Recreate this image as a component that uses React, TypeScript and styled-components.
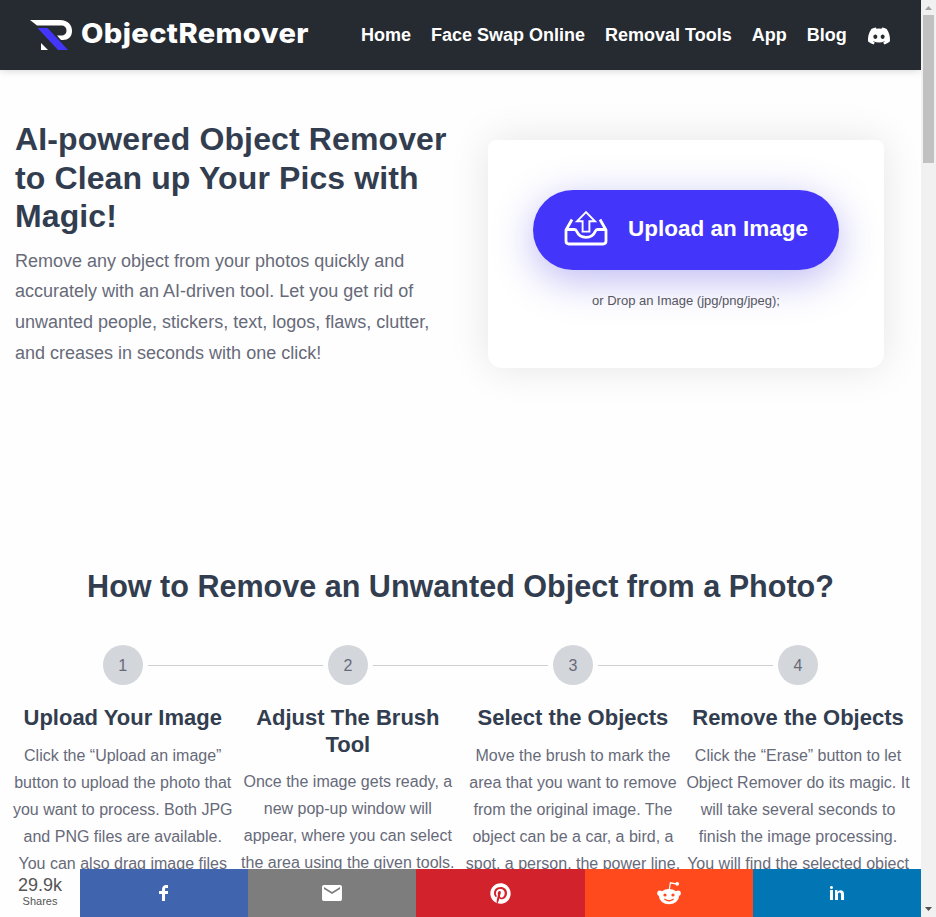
import React from "react";
import styled, { createGlobalStyle } from "styled-components";
import { FaDiscord, FaPinterest } from "react-icons/fa";

const GlobalStyle = createGlobalStyle`
  * { box-sizing: border-box; }
  html, body { margin: 0; overflow: hidden; background: #fefefe; }
  body { font-family: "Liberation Sans", Arial, sans-serif; }
  h1, h2, h3, p { margin: 0; }
`;

const Window = styled.div`
  display: flex;
  width: 936px;
  height: 917px;
`;

const Page = styled.div`
  display: flex;
  flex-direction: column;
  width: 921px;
  height: 100%;
  overflow: hidden;
`;

const Header = styled.header`
  display: flex;
  align-items: center;
  flex: none;
  height: 70px;
  padding: 0 30px;
  background: #262b32;
  color: #fff;
  box-shadow: 0 0 8px rgba(0, 20, 20, 0.2);
  z-index: 1;
`;

const Brand = styled.a`
  display: flex;
  align-items: center;
  width: 331px;
  svg { flex: none; }
`;

const Wordmark = styled.span`
  margin: -2px 0 0 8px;
  font: 800 27px/40px Inter, sans-serif;
  letter-spacing: 0.35px;
  white-space: nowrap;
  transform: scaleX(1.076);
  transform-origin: left center;
`;

const Nav = styled.nav`
  display: flex;
  align-items: center;
  gap: 20px;
  font-size: 18px;
  font-weight: 700;
  line-height: 30px;
  white-space: nowrap;
  svg { display: block; margin: 2px 0 0 0; }
`;

const Content = styled.main`
  flex: 1;
  min-height: 0;
  overflow: hidden;
`;

const Hero = styled.section`
  display: flex;
  justify-content: space-between;
  height: 496px;
  padding: 50px 37px 0 15px;
`;

const HeroText = styled.div`
  width: 445px;
  white-space: nowrap;
`;

const Title = styled.h1`
  color: #323d4f;
  font-size: 32px;
  line-height: 38.5px;
  letter-spacing: 0.12px;
`;

const Lead = styled.p`
  margin-top: 10.4px;
  color: #676a79;
  font-size: 18px;
  line-height: 30.6px;
`;

const UploadCard = styled.div`
  display: flex;
  flex-direction: column;
  align-items: center;
  width: 396px;
  height: 228px;
  margin-top: 20px;
  padding-top: 50px;
  border-radius: 8px 8px 14px 14px;
  background: #fff;
  box-shadow: 0 0 40px rgba(0, 0, 0, 0.1);
`;

const UploadButton = styled.button`
  display: flex;
  align-items: center;
  width: 306px;
  height: 80px;
  padding: 0 0 2px 31px;
  border: 0;
  border-radius: 40px;
  background: #4336fa;
  color: #fff;
  font: 700 22.5px "Liberation Sans", Arial, sans-serif;
  white-space: nowrap;
  box-shadow: 0 10px 40px rgba(67, 54, 220, 0.35);
  svg { flex: none; margin: -3px 20px 0 0; }
`;

const DropHint = styled.p`
  margin-top: 22px;
  color: #55565e;
  font-size: 13px;
  line-height: 18px;
`;

const SectionTitle = styled.h2`
  color: #323d4f;
  font-size: 30.55px;
  line-height: 40px;
  text-align: center;
  white-space: nowrap;
`;

const Steps = styled.ol`
  display: grid;
  grid-template-columns: repeat(4, 225.1px);
  margin: 39px 0 0 10.2px;
  padding: 0;
  list-style: none;
`;

const Step = styled.li`
  display: flex;
  flex-direction: column;
  align-items: center;
  text-align: center;
  white-space: nowrap;
`;

const Marker = styled.div`
  display: grid;
  grid-template-columns: 40px 175px;
  align-items: center;
  column-gap: 5px;
  width: 40px;
`;

const Circle = styled.span`
  height: 40px;
  border-radius: 50%;
  background: #d3d6db;
  color: #676a79;
  font-size: 16px;
  line-height: 41px;
`;

const Connector = styled.span`
  height: 1px;
  background: #cdd0d3;
`;

const StepTitle = styled.h3`
  margin-top: 20px;
  color: #323d4f;
  font-size: 22px;
  line-height: 26.5px;
`;

const StepText = styled.p`
  margin-top: 10px;
  color: #676a79;
  font-size: 16px;
  line-height: 27px;
`;

const Line = styled.span`
  display: block;
`;

const ShareBar = styled.footer`
  display: grid;
  grid-template-columns: 80px repeat(5, 1fr);
  flex: none;
  height: 48px;
  background: #fefefe;
`;

const ShareCount = styled.div`
  padding-top: 6px;
  color: #555;
  font-size: 18px;
  line-height: 20px;
  text-align: center;
  small { display: block; font-size: 11px; line-height: 12px; }
`;

const ShareButton = styled.a<{ $color: string }>`
  display: flex;
  align-items: center;
  justify-content: center;
  background: ${(p) => p.$color};
  color: #fff;
`;

const Scrollbar = styled.div`
  display: flex;
  flex-direction: column;
  justify-content: space-between;
  align-items: center;
  width: 15px;
  height: 100%;
  background: #f1f1f1;
`;

const Thumb = styled.div`
  width: 11px;
  height: 148px;
  margin-bottom: auto;
  background: #c1c1c1;
`;

const ScrollArrow = styled.svg`
  display: block;
  width: 15px;
  height: 15px;
`;

const steps = [
  {
    title: ["Upload Your Image"],
    text: ["Click the “Upload an image”", "button to upload the photo that", "you want to process. Both JPG", "and PNG files are available.", "You can also drag image files"],
  },
  {
    title: ["Adjust The Brush", "Tool"],
    text: ["Once the image gets ready, a", "new pop-up window will", "appear, where you can select", "the area using the given tools."],
  },
  {
    title: ["Select the Objects"],
    text: ["Move the brush to mark the", "area that you want to remove", "from the original image. The", "object can be a car, a bird, a", "spot, a person, the power line,"],
  },
  {
    title: ["Remove the Objects"],
    text: ["Click the “Erase” button to let", "Object Remover do its magic. It", "will take several seconds to", "finish the image processing.", "You will find the selected object"],
  },
];

const Lines = ({ items }: { items: string[] }) => (
  <>
    {items.map((t) => (
      <Line key={t}>{t}</Line>
    ))}
  </>
);

const LogoMark = () => (
  <svg width="43" height="32" viewBox="0 0 43 32">
    <path d="M0 1H30C38 1 42 6 42 12C42 18 38 21 33 21H31L27 16.5H31C34.5 16.5 36.5 14.5 36.5 11.5C36.5 8.5 34.5 6.5 31 6.5H7Z" fill="#fff" />
    <path d="M7.5 9H17.5L38 31H28Z" fill="#4336fa" />
    <path d="M11 24V31H18Z" fill="#fff" />
  </svg>
);

const UploadIcon = () => (
  <svg width="44" height="36" viewBox="0 0 44 36" fill="none" stroke="#fff" strokeLinejoin="round">
    <path d="M8 9.5L2 20V31Q2 34 5 34H39Q42 34 42 31V20L36 9.5" strokeWidth="2.8" />
    <path d="M2 19.5H10.5Q12 19.5 12.8 21.5C14.5 25.5 18 27.3 22 27.3S29.5 25.5 31.2 21.5Q32 19.5 33.5 19.5H42" strokeWidth="2.8" />
    <path d="M22 2.2L13 11.3H18.6V21.6H25.4V11.3H31Z" strokeWidth="1.9" strokeLinejoin="miter" />
  </svg>
);

const RedditIcon = ({ cut }: { cut: string }) => (
  <svg width="24" height="24" viewBox="0 0 24 24" fill="#fff">
    <circle cx="2.8" cy="12.2" r="2.6" />
    <circle cx="21.2" cy="12.2" r="2.6" />
    <ellipse cx="12" cy="15.6" rx="10" ry="7.7" />
    <path d="M12.2 9L13.4 1.8L19 2.8" fill="none" stroke="#fff" strokeWidth="1.2" />
    <circle cx="20.2" cy="2.8" r="1.9" />
    <circle cx="8" cy="14" r="1.6" fill={cut} />
    <circle cx="16" cy="14" r="1.6" fill={cut} />
    <path d="M7.8 18.3Q12 21.2 16.2 18.3" fill="none" stroke={cut} strokeWidth="1.3" strokeLinecap="round" />
  </svg>
);

const ShareGlyph = ({ d }: { d: string }) => (
  <svg width="24" height="24" viewBox="0 0 40 40" fill="#fff">
    <path d={d} />
  </svg>
);

const facebook = "m21.7 16.7h5v5h-5v11.6h-5v-11.6h-5v-5h5v-2.1c0-2 0.6-4.5 1.8-5.9 1.3-1.3 2.8-2 4.7-2h3.5v5h-3.5c-0.9 0-1.5 0.6-1.5 1.5v3.5z";
const email = "m33.4 13.4v-3.4l-13.4 8.4-13.4-8.4v3.4l13.4 8.2z m0-6.8q1.3 0 2.3 1.1t0.9 2.3v20q0 1.3-0.9 2.3t-2.3 1.1h-26.8q-1.3 0-2.3-1.1t-0.9-2.3v-20q0-1.3 0.9-2.3t2.3-1.1h26.8z";
const linkedin = "m13.3 31.7h-5v-16.7h5v16.7z m18.4 0h-5v-8.9c0-2.4-0.9-3.5-2.5-3.5-1.3 0-2.1 0.6-2.5 1.9v10.5h-5s0-15 0-16.7h3.9l0.3 3.3h0.1c1-1.6 2.7-2.8 4.9-2.8 1.7 0 3.1 0.5 4.2 1.7 1 1.2 1.6 2.8 1.6 5.1v9.4z m-18.3-20.9c0 1.4-1.1 2.5-2.6 2.5s-2.5-1.1-2.5-2.5 1.1-2.5 2.5-2.5 2.6 1.2 2.6 2.5z";

export default function App() {
  return (
    <Window>
      <GlobalStyle />
      <Page>
        <Header>
          <Brand>
            <LogoMark />
            <Wordmark>ObjectRemover</Wordmark>
          </Brand>
          <Nav>
            <a>Home</a>
            <a>Face Swap Online</a>
            <a>Removal Tools</a>
            <a>App</a>
            <a>Blog</a>
            <a><FaDiscord size={24} /></a>
          </Nav>
        </Header>
        <Content>
          <Hero>
            <HeroText>
              <Title>
                <Lines items={["AI-powered Object Remover", "to Clean up Your Pics with", "Magic!"]} />
              </Title>
              <Lead>
                <Lines
                  items={[
                    "Remove any object from your photos quickly and",
                    "accurately with an AI-driven tool. Let you get rid of",
                    "unwanted people, stickers, text, logos, flaws, clutter,",
                    "and creases in seconds with one click!",
                  ]}
                />
              </Lead>
            </HeroText>
            <UploadCard>
              <UploadButton>
                <UploadIcon />
                Upload an Image
              </UploadButton>
              <DropHint>or Drop an Image (jpg/png/jpeg);</DropHint>
            </UploadCard>
          </Hero>
          <SectionTitle>How to Remove an Unwanted Object from a Photo?</SectionTitle>
          <Steps>
            {steps.map((s, i) => (
              <Step key={s.title[0]}>
                <Marker>
                  <Circle>{i + 1}</Circle>
                  {i < steps.length - 1 && <Connector />}
                </Marker>
                <StepTitle><Lines items={s.title} /></StepTitle>
                <StepText><Lines items={s.text} /></StepText>
              </Step>
            ))}
          </Steps>
        </Content>
        <ShareBar>
          <ShareCount>29.9k<small>Shares</small></ShareCount>
          <ShareButton $color="#4064ad"><ShareGlyph d={facebook} /></ShareButton>
          <ShareButton $color="#7d7d7d"><ShareGlyph d={email} /></ShareButton>
          <ShareButton $color="#d2232d"><FaPinterest size={21} /></ShareButton>
          <ShareButton $color="#ff4a1e"><RedditIcon cut="#ff4a1e" /></ShareButton>
          <ShareButton $color="#0276b4"><ShareGlyph d={linkedin} /></ShareButton>
        </ShareBar>
      </Page>
      <Scrollbar>
        <ScrollArrow viewBox="0 0 15 15"><path d="M4 10L7.5 6L11 10Z" fill="#a3a3a3" /></ScrollArrow>
        <Thumb />
        <ScrollArrow viewBox="0 0 15 15"><path d="M4 5L7.5 9L11 5Z" fill="#505050" /></ScrollArrow>
      </Scrollbar>
    </Window>
  );
}
